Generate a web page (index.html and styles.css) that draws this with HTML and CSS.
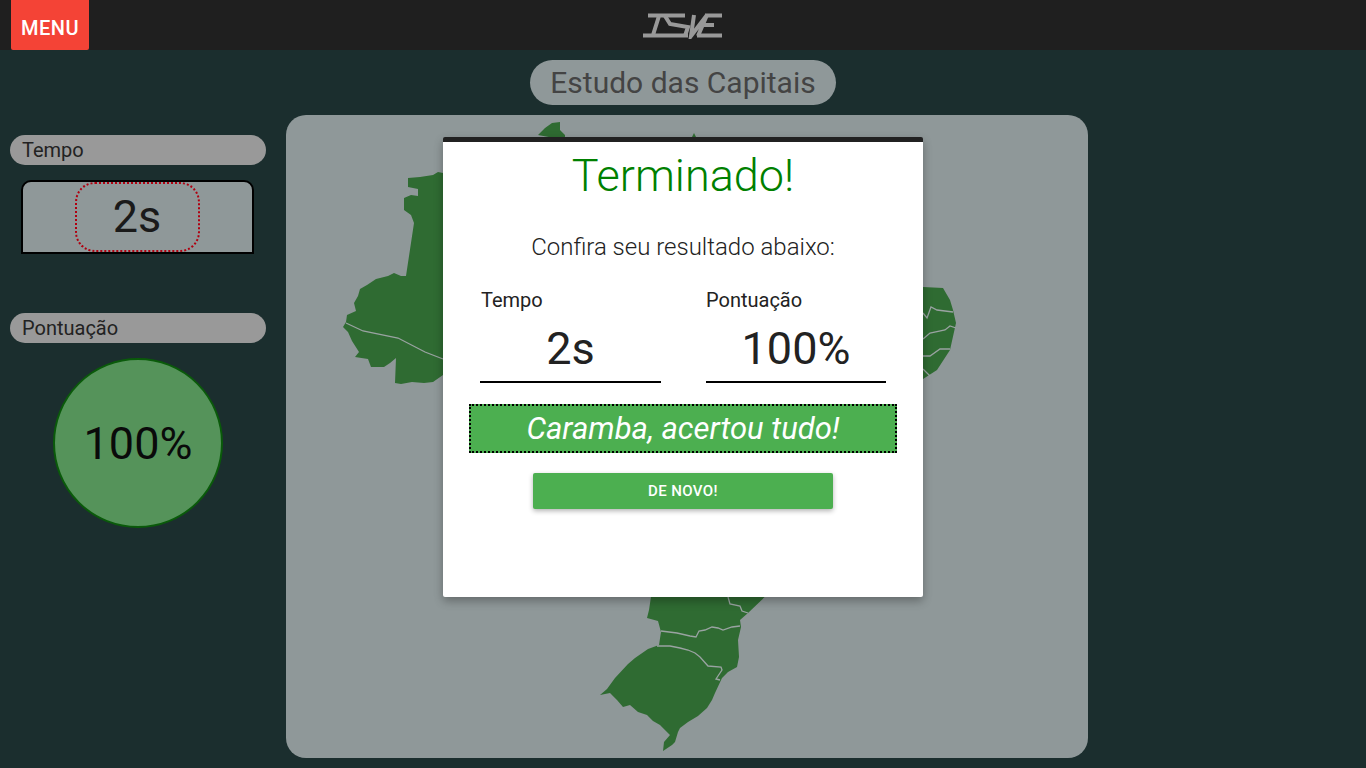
FILE: index.html
```html
<!DOCTYPE html>
<html lang="pt-BR">
<head>
<meta charset="UTF-8" />
<meta name="viewport" content="width=device-width, initial-scale=1.0"/>
<title>Estudo das Capitais</title>
<link rel="stylesheet" href="styles.css">
</head>
<body>

<header class="topbar">
  <button class="menu-btn">MENU</button>
  <svg class="logo" viewBox="643 13 80 26" aria-label="ISWE">
    <g fill="none" stroke="#999" stroke-width="4">
      <path d="M648 15.5H685M659 16L653 35M643 35.5H688"/>
      <path d="M665 16L670 24L688 27L685 36"/>
      <path d="M694 15L691 36L707 15M707 15L698 36"/>
      <path d="M705 15.5H722M702 25H714M697 35.5H722"/>
    </g>
  </svg>
</header>

<h1 class="page-title">Estudo das Capitais</h1>

<div class="content">
  <aside class="sidebar">
    <div class="side-label">Tempo</div>
    <div class="timer-box">
      <div class="timer-value">2s</div>
    </div>
    <div class="side-label score-label">Pontuação</div>
    <div class="score-circle">100%</div>
  </aside>

  <main class="map-panel">
    <!-- viewBox uses page coordinates -->
    <svg class="map" viewBox="286 115 802 643">
      <g fill="#2f6b32">
        <path d="M538 135L545 128L552 123L560 122L560 130L565 135V160H443V173L438 172L433 175L420 177L408 178V187L418 189V196L411 195L404 198V210L411 215L414 223L406 276H401L394 273L388 276L376 279L367 285L360 289L358 296L354 303L356 311L347 315L346 322L343 327L348 332L352 341L359 352L355 357L368 359L371 367H384L390 363L396 358L395 383L401 384L412 382L424 383L433 382L443 375H923V379L937 370L950 350L956 323L953 310L950 300L943 288L923 287V140H565Z"/>
        <path d="M692 137L694 133L696 137Z"/>
        <path d="M652 590L649 610L647 618L658 621L661 632L659 645L648 649L635 658L628 664L615 678L607 689L600 695L610 693L617 700L623 707L630 705L638 712L647 715L653 721L660 725L670 735L664 742L663 751L672 745L675 742L678 732L680 728L688 722L698 716L707 708L712 700L715 693L722 678L728 672L737 667L739 657L738 640L741 627L740 620L748 613L772 590Z"/>
      </g>
      <g fill="none" stroke="#9aa3a2" stroke-width="1.3">
        <path d="M346 323L363 331L398 338L425 352L443 359"/>
        <path d="M923 313L927 318L931 307L937 310L953 312"/>
        <path d="M923 339L930 333L945 330L950 326L956 328"/>
        <path d="M923 356L930 356L940 349L950 349"/>
        <path d="M923 369L930 376"/>
        <path d="M661 631L677 633L690 636L696 637L699 631L705 630L712 627L718 628L723 630L732 627L740 626"/>
        <path d="M657 646L670 646L680 648L688 650L695 653L700 657L708 666L721 667L722 670L716 679L720 680"/>
        <path d="M728 597L730 604L740 606L742 611L748 613"/>
      </g>
    </svg>

    <section class="modal">
      <h2 class="modal-title">Terminado!</h2>
      <p class="modal-sub">Confira seu resultado abaixo:</p>
      <div class="results">
        <div class="result">
          <label class="result-label">Tempo</label>
          <div class="result-value">2s</div>
        </div>
        <div class="result result-score">
          <label class="result-label">Pontuação</label>
          <div class="result-value">100%</div>
        </div>
      </div>
      <div class="banner">Caramba, acertou tudo!</div>
      <button class="again-btn">De novo!</button>
    </section>
  </main>
</div>

</body>
</html>
```

FILE: styles.css
```css
body {
  font-family: Roboto, "Liberation Sans", sans-serif;
  background-color: #1b2e2e;
  margin: 0;
  height: 768px;
  overflow: hidden;
}
.topbar {
  height: 50px;
  background-color: #1f1f1f;
  padding-left: 11px;
  display: flex;
  align-items: flex-start;
  position: relative;
}
.menu-btn {
  width: 78px;
  height: 50px;
  padding: 6px 0 0;
  background-color: #f44336;
  color: #fff;
  border: none;
  border-radius: 0 0 2px 2px;
  font-family: inherit;
  font-size: 20px;
  font-weight: 500;
  letter-spacing: 0.5px;
}
.logo {
  position: absolute;
  left: 643px;
  top: 13px;
  width: 80px;
  height: 26px;
}
.page-title {
  width: 306px;
  height: 45px;
  margin: 10px auto;
  border-radius: 23px;
  background-color: #8f9899;
  color: #444;
  font-size: 30px;
  font-weight: 400;
  line-height: 45px;
  text-align: center;
}
.content {
  display: flex;
  align-items: flex-start;
}
.sidebar {
  width: 256px;
  margin: 20px 20px 0 10px;
  display: flex;
  flex-direction: column;
  align-items: center;
}
.side-label {
  align-self: stretch;
  height: 30px;
  padding-left: 12px;
  border-radius: 15px;
  background-color: #999;
  color: #222;
  font-size: 20px;
  line-height: 30px;
}
.timer-box {
  box-sizing: border-box;
  width: 233px;
  height: 74px;
  margin: 15px 0 0 -2px;
  border: 2px solid #000;
  border-radius: 10px 10px 0 0;
  background-color: #8f9899;
  display: flex;
  justify-content: center;
}
.timer-value {
  box-sizing: border-box;
  width: 125px;
  height: 70px;
  border: 2px dotted #b00010;
  border-radius: 20px;
  color: #1a1a1a;
  font-size: 45px;
  font-weight: 400;
  line-height: 66px;
  text-align: center;
}
.score-label {
  margin-top: 59px;
}
.score-circle {
  box-sizing: border-box;
  width: 170px;
  height: 170px;
  margin-top: 15px;
  border: 2px solid #0a5a0a;
  border-radius: 50%;
  background-color: #55935a;
  color: #0a0a0a;
  font-size: 45px;
  font-weight: 400;
  line-height: 168px;
  text-align: center;
}
.map-panel {
  width: 802px;
  height: 643px;
  border-radius: 20px;
  background-color: #8f9899;
  position: relative;
  overflow: hidden;
}
.map {
  display: block;
  width: 802px;
  height: 643px;
}
.modal {
  position: absolute;
  left: 157px;
  top: 22px;
  box-sizing: border-box;
  width: 480px;
  height: 460px;
  border-top: 5px solid #212121;
  border-radius: 2px;
  background-color: #fff;
  box-shadow: 0 4px 10px rgba(0, 0, 0, 0.3);
  display: flex;
  flex-direction: column;
  align-items: center;
}
.modal-title {
  margin: 6px 0 0;
  color: #008000;
  font-size: 45px;
  font-weight: 300;
  line-height: 56px;
}
.modal-sub {
  margin: 28px 0 0;
  color: #222;
  font-size: 24px;
  font-weight: 300;
  line-height: 30px;
}
.results {
  width: 406px;
  margin-top: 26px;
  display: flex;
  justify-content: space-between;
}
.result {
  width: 181px;
}
.result-score {
  width: 180px;
}
.result-label {
  display: block;
  padding-left: 1px;
  color: #222;
  font-size: 20px;
  line-height: 24px;
}
.result-score .result-label {
  padding-left: 0;
}
.result-value {
  height: 69px;
  border-bottom: 2px solid #000;
  color: #222;
  font-size: 45px;
  font-weight: 400;
  line-height: 74px;
  text-align: center;
}
.banner {
  box-sizing: border-box;
  width: 428px;
  height: 49px;
  margin-top: 21px;
  border: 2px dotted #000;
  background-color: #4caf50;
  color: #fff;
  font-size: 31px;
  font-style: italic;
  font-weight: 400;
  line-height: 45px;
  text-align: center;
}
.again-btn {
  width: 300px;
  height: 36px;
  margin-top: 20px;
  border: none;
  border-radius: 2px;
  background-color: #4caf50;
  color: #fff;
  font-family: inherit;
  font-size: 15px;
  font-weight: 500;
  letter-spacing: 0.4px;
  text-transform: uppercase;
  box-shadow: 0 2px 5px rgba(0, 0, 0, 0.3);
}
```
